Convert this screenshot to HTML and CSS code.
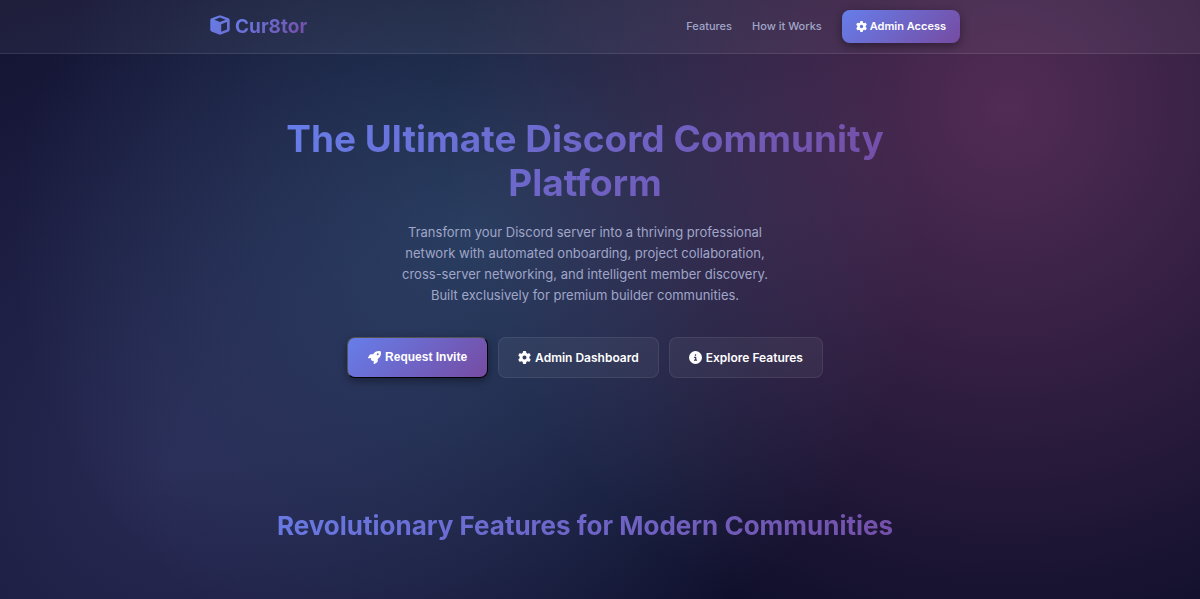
FILE: index.html
```html
<!DOCTYPE html>
<html lang="en">
<head>
<meta charset="utf-8">
<meta name="viewport" content="width=device-width, initial-scale=1">
<title>Cur8tor</title>
<link rel="stylesheet" href="styles.css">
</head>
<body>
<svg class="defs" aria-hidden="true">
  <defs>
    <linearGradient id="brand" x1="0" y1="0" x2="1" y2="1">
      <stop offset="0" stop-color="#667eea"/>
      <stop offset="1" stop-color="#6b6fd2"/>
    </linearGradient>
    <symbol id="gear" viewBox="0 0 512 512">
      <path d="M495.9 166.6c3.200 8.700 .5 18.400-6.400 24.600l-43.300 39.400c1.100 8.300 1.700 16.800 1.700 25.400s-.6 17.100-1.700 25.400l43.300 39.400c6.900 6.200 9.600 15.900 6.400 24.600c-4.400 11.900-9.700 23.300-15.800 34.300l-4.700 8.100c-6.600 11-14 21.400-22.100 31.200c-5.900 7.200-15.700 9.600-24.500 6.800l-55.700-17.700c-13.400 10.300-28.200 18.900-44 25.400l-12.500 57.100c-2 9.100-9 16.300-18.200 17.800c-13.800 2.300-28 3.500-42.500 3.500s-28.700-1.200-42.500-3.500c-9.200-1.500-16.200-8.700-18.200-17.800l-12.500-57.100c-15.800-6.500-30.600-15.100-44-25.400L83.100 425.900c-8.800 2.800-18.600 .3-24.500-6.800c-8.100-9.800-15.500-20.200-22.100-31.200l-4.700-8.100c-6.100-11-11.400-22.400-15.800-34.300c-3.200-8.700-.5-18.400 6.400-24.600l43.300-39.400C64.600 273.100 64 264.600 64 256s.6-17.100 1.700-25.400L22.400 191.200c-6.900-6.200-9.600-15.900-6.400-24.600c4.400-11.900 9.700-23.300 15.800-34.300l4.700-8.100c6.600-11 14-21.400 22.100-31.200c5.900-7.200 15.700-9.600 24.500-6.800l55.700 17.700c13.400-10.300 28.200-18.900 44-25.400l12.500-57.100c2-9.100 9-16.300 18.200-17.800C227.300 1.200 241.500 0 256 0s28.700 1.200 42.500 3.500c9.200 1.500 16.200 8.700 18.200 17.800l12.500 57.100c15.800 6.500 30.600 15.100 44 25.400l55.700-17.700c8.800-2.800 18.600-.3 24.500 6.800c8.100 9.800 15.500 20.200 22.100 31.200l4.700 8.100c6.100 11 11.400 22.400 15.800 34.300zM256 336a80 80 0 1 0 0-160 80 80 0 1 0 0 160z"/>
    </symbol>
  </defs>
</svg>

<header class="header">
  <nav class="container nav">
    <a class="logo" href="#top">
      <svg class="logo-icon" viewBox="0 0 20 20" aria-hidden="true"><path fill="url(#brand)" fill-rule="evenodd" d="M9.200 .6Q10 .3 10.800 .6L18.500 3.200Q19.700 3.700 19.700 5V14.800Q19.700 16 18.600 16.500L10.900 19.500Q10 19.800 9.100 19.500L1.400 16.500Q.3 16 .3 14.800V5Q.3 3.700 1.500 3.200ZM10 2.600L4.300 4.700L10 6.900L15.700 4.700ZM11.200 9.300V16.800L17 14.500V7.100Z"/></svg>
      <span class="gradient-text">Cur8tor</span>
    </a>
    <div class="nav-links">
      <a class="nav-link" href="#features">Features</a>
      <a class="nav-link" href="#how">How it Works</a>
      <a class="btn btn-small btn-primary" href="#admin"><svg class="icon" aria-hidden="true"><use href="#gear"/></svg>Admin Access</a>
    </div>
  </nav>
</header>

<main id="top">
  <section class="hero">
    <h1 class="hero-title gradient-text">The Ultimate Discord Community Platform</h1>
    <p class="hero-text">Transform your Discord server into a thriving professional network with automated onboarding, project collaboration, cross-server networking, and intelligent member discovery. Built exclusively for premium builder communities.</p>
    <div class="actions">
      <button class="btn btn-primary btn-invite" type="button"><svg class="icon" viewBox="0 0 512 512" aria-hidden="true"><path d="M156.600 384.900L125.700 354c-8.500-8.500-11.500-20.800-7.700-32.200c3-8.900 7-20.500 11.800-33.800L24 288c-8.600 0-16.600-4.600-20.900-12.100s-4.200-16.700 .2-24.100l52.500-88.500c13-21.900 36.500-35.300 61.900-35.300l82.300 0c2.400-4 4.800-7.700 7.200-11.300C289.100-4.100 411.100-8.100 483.900 5.300c11.600 2.100 20.600 11.200 22.800 22.800c13.400 72.900 9.300 194.800-111.400 276.700c-3.500 2.400-7.300 4.800-11.300 7.200l0 82.300c0 25.400-13.400 49-35.300 61.900l-88.500 52.500c-7.400 4.400-16.600 4.500-24.100 .2s-12.100-12.200-12.100-20.900l0-107.200c-14.100 4.900-26.400 8.900-35.700 11.900c-11.200 3.600-23.400 .5-31.800-7.800zM384 168a40 40 0 1 0 0-80 40 40 0 1 0 0 80z"/></svg>Request Invite</button>
      <a class="btn btn-glass" href="#dashboard"><svg class="icon" aria-hidden="true"><use href="#gear"/></svg>Admin Dashboard</a>
      <a class="btn btn-glass" href="#features"><svg class="icon" viewBox="0 0 512 512" aria-hidden="true"><path d="M256 512A256 256 0 1 0 256 0a256 256 0 1 0 0 512zM216 336l24 0 0-64-24 0c-13.300 0-24-10.700-24-24s10.700-24 24-24l48 0c13.300 0 24 10.700 24 24l0 88 8 0c13.300 0 24 10.700 24 24s-10.700 24-24 24l-80 0c-13.300 0-24-10.700-24-24s10.700-24 24-24zm40-208a32 32 0 1 1 0 64 32 32 0 1 1 0-64z"/></svg>Explore Features</a>
    </div>
  </section>

  <section class="container features" id="features">
    <h2 class="section-title gradient-text">Revolutionary Features for Modern Communities</h2>
  </section>
</main>
</body>
</html>
```
FILE: styles.css
```css
* {
  box-sizing: border-box;
  margin: 0;
  padding: 0;
}

:root {
  --brand: linear-gradient(135deg, #667eea 0%, #764ba2 100%);
  --glass: rgba(255, 255, 255, 0.05);
  --glass-line: rgba(255, 255, 255, 0.1);
  --muted: #a0a6c8;
  --gutter: 30px;
}

body {
  min-height: 100vh;
  font-family: Inter, "Liberation Sans", sans-serif;
  font-size: 13px;
  line-height: 21px;
  color: #fff;
  background:
    radial-gradient(circle 48vw at 14% 78%, rgba(112, 119, 198, 0.26) 0%, transparent 100%),
    radial-gradient(circle 47vw at 84% 18%, rgba(255, 119, 190, 0.28) 0%, transparent 100%),
    radial-gradient(circle 38vw at 39% 39%, rgba(110, 219, 255, 0.2) 0%, transparent 100%),
    #0f0f2c;
  background-attachment: fixed;
}

a {
  color: inherit;
  text-decoration: none;
}

.defs {
  position: absolute;
  width: 0;
  height: 0;
}

.container {
  width: 100%;
  max-width: 750px;
  margin: 0 auto;
}

.gradient-text {
  background: var(--brand);
  -webkit-background-clip: text;
  background-clip: text;
  color: transparent;
}

.header {
  padding: 10px var(--gutter) 10px 0;
  background: var(--glass);
  border-bottom: 1px solid var(--glass-line);
}

.nav {
  display: flex;
  align-items: center;
  justify-content: space-between;
}

.logo {
  display: flex;
  align-items: center;
  gap: 5px;
  font-size: 19px;
  font-weight: 700;
}

.logo-icon {
  width: 20px;
  height: 20px;
  margin-bottom: 3px;
}

.nav-links {
  display: flex;
  align-items: center;
  gap: 20px;
}

.nav-link {
  font-size: 11px;
  font-weight: 500;
  color: var(--muted);
}

.btn {
  display: inline-flex;
  align-items: center;
  justify-content: center;
  gap: 4px;
  padding: 9px 19px;
  border: 1px solid transparent;
  border-radius: 8px;
  font-family: inherit;
  font-size: 12px;
  font-weight: 600;
  line-height: 21px;
  color: #fff;
  white-space: nowrap;
  cursor: pointer;
}

.icon {
  width: 13px;
  height: 13px;
  fill: currentColor;
}

.btn-primary {
  background: var(--brand);
  box-shadow: 0 3px 10px rgba(0, 0, 0, 0.4);
}

.btn-small {
  gap: 3px;
  padding: 6px 14px;
  border: 0;
  font-size: 11px;
}

.btn-small .icon {
  width: 11px;
  height: 11px;
}

.btn-invite {
  padding: 9px 20px;
  border: 1px outset #000;
  font-family: "Liberation Sans", Arial, sans-serif;
}

.btn-glass {
  background: var(--glass);
  border-color: rgba(255, 255, 255, 0.08);
}

main {
  padding-right: var(--gutter);
}

.hero {
  max-width: 600px;
  margin: 0 auto;
  padding: 63px 0 66px;
  text-align: center;
}

.hero-title {
  font-size: 37px;
  font-weight: 700;
  line-height: 44px;
}

.hero-text {
  max-width: 390px;
  margin: 17px auto 31px;
  color: var(--muted);
}

.actions {
  display: flex;
  flex-wrap: wrap;
  justify-content: center;
  gap: 10px;
}

.features {
  padding: 66px 0 52px;
  text-align: center;
}

.section-title {
  font-size: 26px;
  font-weight: 700;
  line-height: 32px;
}
```
